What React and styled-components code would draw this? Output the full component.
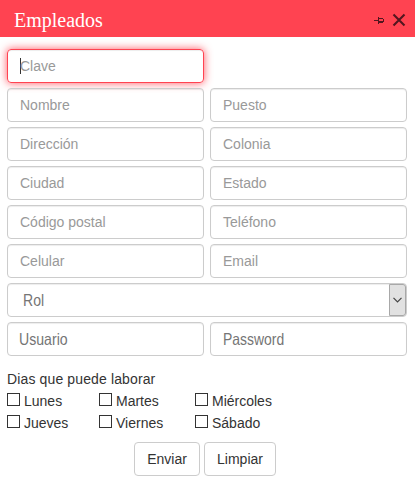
import React from "react";
import styled, { createGlobalStyle, css } from "styled-components";

const GlobalStyle = createGlobalStyle`
  * { box-sizing: border-box; }
  body {
    margin: 0;
    background: #fff;
    color: #333;
    font: 14px/20px "Liberation Sans", Arial, sans-serif;
  }
`;

const Dialog = styled.main`
  width: 415px;
  height: 486px;
  overflow: hidden;
`;

const Header = styled.header`
  display: flex;
  align-items: center;
  height: 37px;
  padding: 3px 9px 0 14px;
  background: #ff4351;
`;

const Title = styled.h1`
  flex: 1;
  margin: 0;
  color: #fff;
  font: 400 20px/24px "Liberation Serif", "Times New Roman", serif;
`;

const Actions = styled.div`
  display: flex;
  align-items: center;
  gap: 8px;
  svg { display: block; }
`;

const Form = styled.div`
  display: grid;
  grid-template-columns: 197px 197px;
  gap: 5px 6px;
  padding: 12px 7px 0;
`;

const Field = styled.div`
  display: flex;
  align-items: center;
  height: 34px;
  padding-left: 12px;
  border: 1px solid #ccc;
  border-radius: 4px;
  box-shadow: inset 0 1px 1px rgba(0, 0, 0, 0.075);
  color: #999;
  ${({ $focused }) => $focused && css`
    border-color: #ff4351;
    box-shadow: inset 0 1px 1px rgba(0, 0, 0, 0.075), 0 0 8px rgba(255, 67, 81, 0.9);
  `}
`;

const EmptyCell = styled.div``;

const Caret = styled.i`
  width: 1px;
  height: 16px;
  margin-right: -1px;
  background: #333;
`;

const Select = styled(Field)`
  grid-column: 1 / -1;
  justify-content: space-between;
  padding-left: 15px;
`;

const Arrow = styled.span`
  display: flex;
  align-items: center;
  justify-content: center;
  width: 17px;
  height: 32px;
  border: 1px solid #a8a8a8;
  border-radius: 0 3px 3px 0;
  background: #e1e1e1;
`;

const Condensed = styled.span`
  display: inline-block;
  color: #757575;
  font-size: 16.5px;
  transform: scaleX(${({ $scale }) => $scale});
  transform-origin: left;
`;

const Credential = styled(Field)`
  padding-left: ${({ $inset }) => $inset}px;
`;

const Days = styled.section`
  padding: 13px 7px 0;
`;

const DaysTitle = styled.div`
  letter-spacing: 0.13px;
`;

const DayGrid = styled.div`
  display: grid;
  grid-template-columns: 92px 96px 100px;
  grid-auto-rows: 22px;
  padding-top: 1px;
`;

const Day = styled.label`
  display: flex;
  align-items: center;
  gap: 4px;
`;

const Box = styled.input`
  appearance: none;
  width: 13px;
  height: 13px;
  margin: 0 0 3px;
  border: 1px solid #333;
  background: #fff;
`;

const Buttons = styled.footer`
  display: flex;
  gap: 4px;
  padding: 8px 0 0 134px;
`;

const Button = styled.button`
  width: ${({ $width }) => $width}px;
  height: 34px;
  padding: 0;
  border: 1px solid #ccc;
  border-radius: 4px;
  background: #fff;
  color: #333;
  font: inherit;
`;

const fields = ["Nombre", "Puesto", "Dirección", "Colonia", "Ciudad", "Estado", "Código postal", "Teléfono", "Celular", "Email"];
const days = ["Lunes", "Martes", "Miércoles", "Jueves", "Viernes", "Sábado"];

export default function App() {
  return (
    <Dialog>
      <GlobalStyle />
      <Header>
        <Title>Empleados</Title>
        <Actions>
          <svg width="10" height="8" viewBox="0 0 10 8" fill="none" stroke="#53161f" shapeRendering="crispEdges">
            <path d="M0 4.5H4M4.5 1V8M5 2.5H9M9.5 3V6" />
            <path d="M5 6H9" strokeWidth="2" />
          </svg>
          <svg width="14" height="14" viewBox="0 0 14 14" fill="none" stroke="#53161f" strokeWidth="2.1">
            <path d="M1.5 1.5L12.5 12.5M12.5 1.5L1.5 12.5" />
          </svg>
        </Actions>
      </Header>
      <Form>
        <Field $focused><Caret /><span>Clave</span></Field>
        <EmptyCell />
        {fields.map((name) => <Field key={name}>{name}</Field>)}
        <Select>
          <Condensed $scale={0.85}>Rol</Condensed>
          <Arrow>
            <svg width="9" height="6" viewBox="0 0 9 6" fill="none" stroke="#444" strokeWidth="1.2">
              <path d="M.5 .8L4.5 4.8L8.5 .8" />
            </svg>
          </Arrow>
        </Select>
        <Credential $inset={11}><Condensed $scale={0.855}>Usuario</Condensed></Credential>
        <Credential $inset={12}><Condensed $scale={0.845}>Password</Condensed></Credential>
      </Form>
      <Days>
        <DaysTitle>Dias que puede laborar</DaysTitle>
        <DayGrid>
          {days.map((day) => <Day key={day}><Box type="checkbox" />{day}</Day>)}
        </DayGrid>
      </Days>
      <Buttons>
        <Button $width={66}>Enviar</Button>
        <Button $width={72}>Limpiar</Button>
      </Buttons>
    </Dialog>
  );
}
